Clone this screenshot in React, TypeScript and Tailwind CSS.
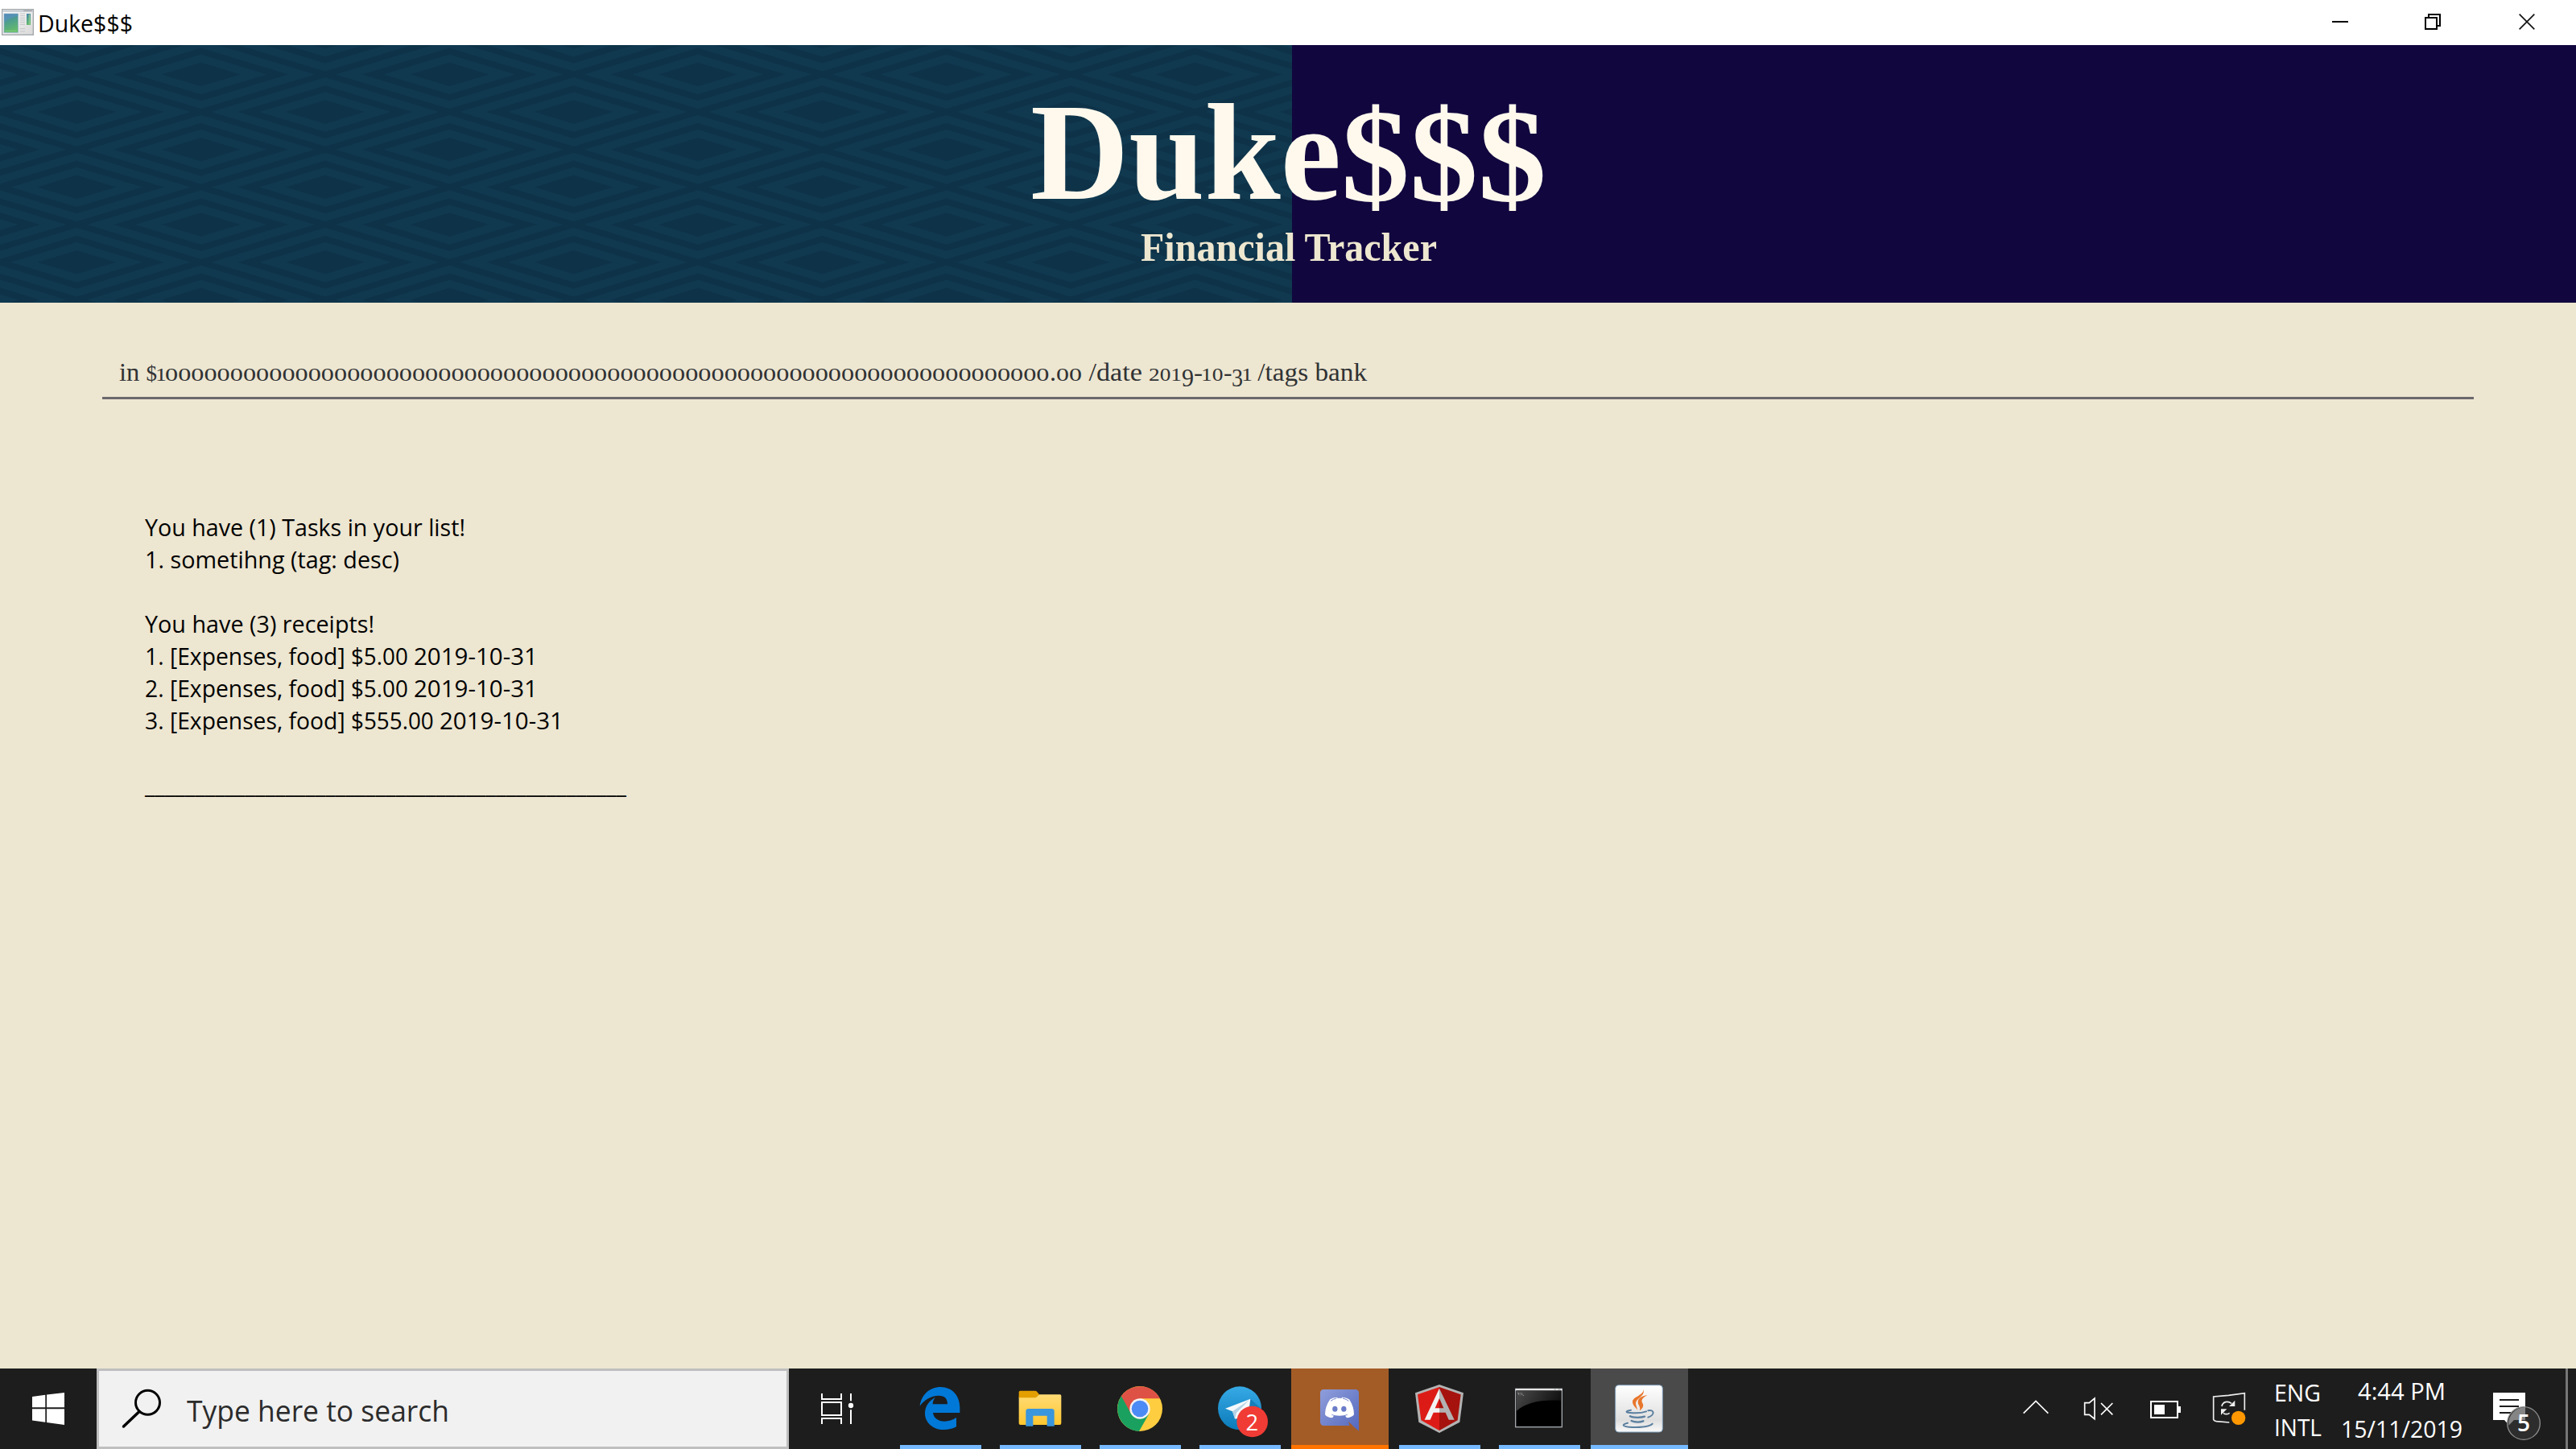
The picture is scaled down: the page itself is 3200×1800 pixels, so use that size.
import React, { useLayoutEffect, useRef } from "react";

/** One run of text, stretched horizontally so that it fills its box. */
function Fit({ children, className = "" }: { children: string; className?: string }) {
  const outer = useRef<HTMLSpanElement>(null);
  const inner = useRef<HTMLSpanElement>(null);
  useLayoutEffect(() => {
    const o = outer.current;
    const i = inner.current;
    if (!o || !i) return;
    i.style.transform = "none";
    const natural = i.getBoundingClientRect().width;
    i.style.transform = `scaleX(${o.getBoundingClientRect().width / natural})`;
  }, [children]);
  return (
    <span ref={outer} className={`block shrink-0 whitespace-pre ${className}`}>
      <span ref={inner} className="inline-block origin-left">
        {children}
      </span>
    </span>
  );
}

/** Icon drawn on a grid of three units to the pixel. */
function Icon({ x, y = 30, w, h = 300, className = "", children }: {
  x: number; y?: number; w: number; h?: number; className?: string; children: React.ReactNode;
}) {
  return (
    <svg className={`block shrink-0 ${className}`} width={w / 3} height={h / 3} viewBox={`${x} ${y} ${w} ${h}`} fill="none">
      {children}
    </svg>
  );
}

function TitleBar() {
  return (
    <div className="flex h-14 shrink-0 items-start bg-white text-black">
      <Icon x={0} y={0} w={129} h={168}>
        <defs>
          <linearGradient id="pane" x1="0" y1="0" x2="0.3" y2="1">
            <stop offset="0" stopColor="#4a7fae" />
            <stop offset="0.5" stopColor="#4fa08c" />
            <stop offset="1" stopColor="#63b96d" />
          </linearGradient>
          <linearGradient id="frame" x1="0" y1="0" x2="1" y2="1">
            <stop offset="0" stopColor="#fdfdfd" />
            <stop offset="1" stopColor="#d8d8d8" />
          </linearGradient>
        </defs>
        <rect x="8" y="35" width="116" height="95" fill="url(#frame)" stroke="#a3a7ab" strokeWidth="4" />
        <path d="M10 41H122" stroke="#c3c9d1" strokeWidth="6" />
        <path d="M88 40H120" stroke="#9aa0a8" strokeWidth="4" />
        <rect x="15" y="51" width="52" height="70" fill="url(#pane)" stroke="#8fb3c6" strokeWidth="2" />
        <path d="M16 84Q35 64 67 60V52H16Z" fill="#5c93c4" opacity="0.6" />
        <path d="M20 115H62" stroke="#86cf7c" strokeWidth="3" />
        <path d="M74 51H93M74 59H93M74 67H93M74 75H93M74 83H93M74 91H93M74 107H93M74 117H93" stroke="#c2c4c6" strokeWidth="3" />
        <rect x="99" y="51" width="15" height="42" fill="url(#pane)" />
        <path d="M109 53V92" stroke="#9fd29c" strokeWidth="3" />
      </Icon>
      <Fit className="ml-[4px] mt-[9px] w-[118px] text-[29.5px] leading-[40px]">Duke$$$</Fit>
      <div className="ml-auto flex">
        <Icon x={120} y={0} w={162} h={168}><path d="M171 81H231" stroke="#000" strokeWidth="6" /></Icon>
        <Icon x={465} y={0} w={162} h={168} className="ml-[61px]">
          <path d="M519 66H561V108H519ZM531 63V54H573V96H564" stroke="#000" strokeWidth="6" />
        </Icon>
        <Icon x={810} y={0} w={270} h={168} className="ml-[61px]">
          <path d="M869 53L925 109M925 53L869 109" stroke="#111" strokeWidth="5" />
        </Icon>
      </div>
    </div>
  );
}

function diamond(cx: number, cy: number, k: number) {
  const a = 154.35 * k;
  const b = 46.67 * k;
  return `M${cx - a} ${cy}L${cx} ${cy - b}L${cx + a} ${cy}L${cx} ${cy + b}Z`;
}

/** Centres of the nested diamonds, every second row shifted by half a period. */
const centres: [number, number][] = [];
for (let row = -1; row <= 7; row++) {
  for (let col = -1; col <= 5; col++) {
    centres.push([95.3 + col * 308.7 + (row % 2 === 0 ? 154.35 : 0), 36.4 + row * 46.67]);
  }
}

const rings: [number, string][] = [
  [0.915, "#103950"],
  [0.705, "#0e3349"],
  [0.528, "#103950"],
  [0.318, "#0e3349"],
];

function DiamondPattern() {
  return (
    <svg className="absolute inset-0" width="1605" height="320">
      <rect width="1605" height="320" fill="#0e3349" />
      {rings.map(([k, fill]) => (
        <path key={k} d={centres.map(([x, y]) => diamond(x, y, k)).join("")} fill={fill} />
      ))}
    </svg>
  );
}

function Banner() {
  return (
    <header className="relative h-[320px] shrink-0 bg-[#11063e]">
      <DiamondPattern />
      <div className="relative flex flex-col items-center pt-[46px] font-['Liberation_Serif',serif] font-bold">
        <h1 className="flex text-[172px] leading-[174px] text-[#fff9ed]">
          <Fit className="w-[386px]">Duke</Fit>
          <Fit className="w-[255px] translate-y-[4px] text-[166px]">$$$</Fit>
        </h1>
        <p className="mt-[6px] text-[50px] leading-[50px] text-[#eee7d0]">
          <Fit className="w-[368px] translate-x-[1px]">Financial Tracker</Fit>
        </p>
      </div>
    </header>
  );
}

const digits = "text-[22.5px]";
const one = "w-[14px] -mx-[2px] text-[22.5px]";
const low = "text-[31px] translate-y-[7px]";

function CommandField() {
  return (
    <div className="ml-[127px] mt-[61px] h-[59px] w-[2946px] shrink-0 border-b-[3px] border-[#6b696c] pl-[21px] pt-[1px] font-['Liberation_Serif',serif] text-[31px] text-[#303234]">
      <div className="flex items-baseline leading-[50px]">
        <Fit className="w-[33.5px]">in </Fit>
        <Fit className="w-[13.5px] text-[27px]">$</Fit>
        <Fit className={one}>1</Fit>
        <Fit className={`w-[1098.5px] ${digits}`}>{"0".repeat(68)}</Fit>
        <Fit className="w-[8px]">.</Fit>
        <Fit className={`w-[32px] ${digits}`}>00</Fit>
        <Fit className="w-[83.5px]"> /date </Fit>
        <Fit className={`w-[41px] ${digits}`}>201</Fit>
        <Fit className={`w-[15px] ${low}`}>9</Fit>
        <Fit className="w-[11px]">-</Fit>
        <Fit className={`w-[27.5px] -ml-[2px] ${digits}`}>10</Fit>
        <Fit className="w-[10.5px]">-</Fit>
        <Fit className={`w-[14px] ${low}`}>3</Fit>
        <Fit className={one}>1</Fit>
        <Fit className="w-[144px]"> /tags bank</Fit>
      </div>
    </div>
  );
}

function Output() {
  return (
    <div className="ml-[180px] mt-[139px] text-[29.5px] leading-[40px] text-black">
      <Fit className="w-[398px]">You have (1) Tasks in your list!</Fit>
      <Fit className="w-[316px]">1. sometihng (tag: desc)</Fit>
      <Fit className="mt-[40px] w-[285px]">You have (3) receipts!</Fit>
      {["1. ", "2. "].map((n) => (
        <div key={n} className="flex">
          <Fit className="w-[256px]">{n + "[Expenses, food] "}</Fit>
          <Fit className="w-[78px]">$5.00 </Fit>
          <Fit className="w-[154px]">2019-10-31</Fit>
        </div>
      ))}
      <div className="flex">
        <Fit className="w-[256px]">{"3. [Expenses, food] "}</Fit>
        <Fit className="w-[110px]">$555.00 </Fit>
        <Fit className="w-[154px]">2019-10-31</Fit>
      </div>
      <Fit className="mt-[40px] w-[598px]">{"_".repeat(48)}</Fit>
    </div>
  );
}

function EdgeIcon() {
  return (
    <Icon x={444} w={363}>
      <path fill="#0078d7" d="M548 170C553 128 585 99 625 99C670 99 697 133 697 175V195H597C599 215 617 227 640 227C655 227 670 222 684 213V247C670 255 655 258 637 258C595 258 567 230 567 197C567 170 583 150 606 137C600 144 596 152 596 163H651C651 143 641 131 618 131C590 131 562 148 548 170Z" />
    </Icon>
  );
}

function FolderIcon() {
  return (
    <Icon x={816} w={363}>
      <defs>
        <linearGradient id="folder" x1="0" y1="0" x2="0" y2="1">
          <stop offset="0" stopColor="#ffdb75" />
          <stop offset="1" stopColor="#ffc62f" />
        </linearGradient>
      </defs>
      <path d="M917 136H980L992 127H1070Q1075 127 1075 132V234Q1075 240 1069 240H923Q917 240 917 234Z" fill="url(#folder)" />
      <path d="M917 139V118Q917 113 922 113H977Q982 113 985 117L993 127L984 136Q981 139 976 139Z" fill="#e39f00" />
      <path d="M943 245V190Q943 180 953 180H1039Q1049 180 1049 190V245H1022V206H970V245Z" fill="#3a96dd" />
    </Icon>
  );
}

function ChromeIcon() {
  return (
    <Icon x={48} w={363}>
      <circle cx="228" cy="180" r="84" fill="#ffcd40" />
      <path d="M159 133A84 84 0 0 0 225 264L262 199L228 180Z" fill="#1aa15f" />
      <path d="M159 133A84 84 0 0 1 303 142H228V180L195 199Z" fill="#de5145" />
      <circle cx="228" cy="180" r="38" fill="#f4f4f4" />
      <circle cx="228" cy="180" r="31" fill="#4c8bf5" />
    </Icon>
  );
}

function TelegramIcon() {
  return (
    <Icon x={420} w={363}>
      <defs>
        <linearGradient id="telegram" x1="0" y1="0" x2="0" y2="1">
          <stop offset="0" stopColor="#36aae6" />
          <stop offset="1" stopColor="#0b7ab8" />
        </linearGradient>
      </defs>
      <circle cx="600" cy="178" r="81" fill="url(#telegram)" />
      <path d="M640 143L680 180V200L640 215L600 195Z" fill="#0f74ad" opacity="0.7" />
      <path d="M546 179L640 143L632 205L583 218L573 190Z" fill="#f5f9fc" />
      <path d="M573 190L636 147L588 195L582 218Z" fill="#b5d2e6" />
      <circle cx="647" cy="228" r="58" fill="#f03c35" />
      <text x="646" y="262" textAnchor="middle" fontSize="82" fill="#fff" fontFamily="Open Sans, sans-serif">2</text>
    </Icon>
  );
}

function DiscordIcon() {
  return (
    <Icon x={792} w={363}>
      <defs>
        <linearGradient id="discord" x1="0" y1="0" x2="1" y2="1">
          <stop offset="0" stopColor="#8f9edb" />
          <stop offset="1" stopColor="#5468bd" />
        </linearGradient>
      </defs>
      <path d="M914 108H1030Q1044 108 1044 122V263L1020 243H914Q900 243 900 229V122Q900 108 914 108Z" fill="url(#discord)" />
      <path d="M1005 228L1044 263L1020 243H1010Z" fill="#a45c27" />
      <path d="M937 145Q948 137 963 137L965 141Q972 140 979 141L982 137Q996 137 1008 145Q1026 172 1026 202Q1017 213 999 214L993 206Q1000 204 1004 200Q972 212 940 200Q944 204 951 206L945 214Q926 213 918 202Q918 172 937 145Z" fill="#fff" />
      <path d="M939 151Q948 144 961 141M1006 151Q997 144 984 141" stroke="#7685cc" strokeWidth="3" />
      <ellipse cx="955" cy="181" rx="9.5" ry="10.5" fill="#6b7cc9" />
      <ellipse cx="988" cy="181" rx="9.5" ry="10.5" fill="#6b7cc9" />
    </Icon>
  );
}

function AngularIcon() {
  return (
    <Icon x={24} w={363}>
      <path d="M204 90L294 121L280 230L204 270L127 230L114 121Z" fill="#b3b3b3" />
      <path d="M204 99L123 127L136 223L204 261Z" fill="#dd1b16" />
      <path d="M204 99L284 127L272 223L204 261Z" fill="#a6120d" />
      <path d="M204 104L149 221H170L182 194H204V178H188L204 141Z" fill="#f2f2f2" />
      <path d="M204 104L260 221H239L227 194H204V178H220L204 141Z" fill="#b2b2b2" />
    </Icon>
  );
}

function ConsoleIcon() {
  return (
    <Icon x={396} w={363}>
      <defs>
        <linearGradient id="gloss" x1="0" y1="0" x2="1" y2="0.3">
          <stop offset="0" stopColor="#4a4a4a" />
          <stop offset="1" stopColor="#121212" />
        </linearGradient>
      </defs>
      <rect x="488" y="106" width="173" height="142" fill="#000" stroke="#a5a9ae" strokeWidth="4" />
      <path d="M492 114H657V149Q540 143 492 188Z" fill="url(#gloss)" />
      <rect x="488" y="105" width="173" height="7" fill="#e6e6e6" />
      <path d="M632 108H638M646 108H656" stroke="#999" strokeWidth="3" />
      <path d="M496 122H500V128M505 121V124M505 128V130M510 121L513 129M515 130H519" stroke="#bbb" strokeWidth="2" />
    </Icon>
  );
}

function JavaIcon() {
  return (
    <Icon x={768} w={363}>
      <defs>
        <linearGradient id="java" x1="0" y1="0" x2="0" y2="1">
          <stop offset="0" stopColor="#fff" />
          <stop offset="0.75" stopColor="#dfdfdf" />
          <stop offset="1" stopColor="#fafafa" />
        </linearGradient>
      </defs>
      <rect x="860" y="92" width="176" height="175" rx="12" fill="url(#java)" stroke="#7f9db8" strokeWidth="3" />
      <path d="M964 104C972 128 924 134 924 154C924 168 936 176 943 185C938 166 932 160 940 149C950 136 972 128 964 104Z" fill="#e8762b" />
      <path d="M980 129C958 132 944 142 944 155C944 166 955 171 951 187C966 176 966 166 960 157C955 146 964 137 980 129Z" fill="#e8762b" />
      <g stroke="#5b7f9f" strokeLinecap="round" fill="none">
        <path d="M918 185C898 188 896 194 915 195C935 197 958 196 975 190" strokeWidth="6" />
        <path d="M982 187C1004 181 1010 202 982 212" strokeWidth="6" />
        <path d="M915 208C925 214 955 214 969 209" strokeWidth="7" />
        <path d="M920 225C932 231 952 231 964 226" strokeWidth="7" />
        <path d="M906 233C884 238 884 245 912 248C945 251 985 248 998 236" strokeWidth="6" />
      </g>
    </Icon>
  );
}

const apps = [
  { name: "edge", icon: <EdgeIcon />, tile: "", bar: "mx-[10px] bg-[#76b9ff]" },
  { name: "folder", icon: <FolderIcon />, tile: "", bar: "mx-[10px] bg-[#76b9ff]" },
  { name: "chrome", icon: <ChromeIcon />, tile: "", bar: "mx-[10px] bg-[#76b9ff]" },
  { name: "telegram", icon: <TelegramIcon />, tile: "", bar: "mx-[10px] bg-[#76b9ff]" },
  { name: "discord", icon: <DiscordIcon />, tile: "bg-[#a45c27]", bar: "bg-[#ff7400]" },
  { name: "angular", icon: <AngularIcon />, tile: "", bar: "mx-[10px] bg-[#76b9ff]" },
  { name: "console", icon: <ConsoleIcon />, tile: "", bar: "mx-[10px] bg-[#76b9ff]" },
  { name: "java", icon: <JavaIcon />, tile: "bg-[#4a4a4a]", bar: "bg-[#76b9ff]" },
];

function Tray() {
  return (
    <div className="ml-auto flex text-white">
      <Icon x={90} w={120}><path d="M101 197L147 151L193 197" stroke="#fff" strokeWidth="5" /></Icon>
      <Icon x={318} w={120} className="ml-[36px]">
        <path d="M329 158H346L366 141V218L346 202H329Z" stroke="#fff" strokeWidth="5" />
        <path d="M390 159L433 202M433 159L390 202" stroke="#fff" strokeWidth="5" />
      </Icon>
      <Icon x={564} w={132} className="ml-[42px]">
        <rect x="576" y="153" width="99" height="60" stroke="#fff" strokeWidth="6" />
        <path d="M588 165H627V201H588ZM678 171H687V195H678Z" fill="#fff" />
      </Icon>
      <Icon x={801} w={132} className="ml-[35px]">
        <path d="M925 185V122L865 130L809 135V220Q811 226 820 227L868 231" stroke="#ededed" strokeWidth="5" />
        <path d="M840 171C843 154 862 149 876 160" stroke="#ededed" strokeWidth="5" />
        <path d="M889 149V171H867Z" fill="#ededed" />
        <path d="M837 203V181H859Z" fill="#ededed" />
        <path d="M846 196C853 202 861 201 869 196" stroke="#ededed" strokeWidth="5" />
        <circle cx="902" cy="214" r="26" fill="#ff9800" />
      </Icon>
      <div className="ml-[34px] mt-[8px] flex w-[60px] flex-col text-[29px] leading-[43px]">
        <Fit className="w-[58px]">ENG</Fit>
        <Fit className="w-[59px]">INTL</Fit>
      </div>
      <div className="ml-[22px] mt-[4px] flex w-[152px] flex-col items-center text-[29px] leading-[47px]">
        <Fit className="w-[109px]">4:44 PM</Fit>
        <Fit className="w-[151px]">15/11/2019</Fit>
      </div>
      <Icon x={885} w={189} className="ml-[36px]">
        <path d="M891 120H1011V222H969L951 242L933 222H891Z" fill="#fff" />
        <path d="M915 147H987M915 171H987M915 195H960" stroke="#1d1d1d" strokeWidth="6" />
        <circle cx="1005" cy="234" r="61" fill="#2d2d2d" />
        <path d="M1011 174V222H969L949 242A61 61 0 0 1 1011 174Z" fill="#858585" />
        <circle cx="1005" cy="234" r="61" stroke="#8e8e8e" strokeWidth="4" />
        <text x="1005" y="264" textAnchor="middle" fontSize="84" fontWeight="600" fill="#fff" fontFamily="Open Sans, sans-serif">5</text>
      </Icon>
      <div className="ml-[29px] mr-[10px] w-[3px] bg-[#777]" />
    </div>
  );
}

function Taskbar() {
  return (
    <footer className="flex h-[100px] shrink-0 bg-[#1d1d1d]">
      <svg className="block shrink-0" width="120" height="100" viewBox="0 0 120 100">
        <path d="M40 35L56.3 32.8V48.3H40ZM58 32.5L80 30V48.3H58ZM40 50.2H56.3V66.7L40 64.5ZM58 50.2H80V70L58 67Z" fill="#fff" />
      </svg>
      <div className="flex w-[860px] shrink-0 border-[3px] border-[#bfbfbf] bg-[#f1f1f1] text-[#2b2b2b]">
        <svg className="-mt-[3px] -ml-[3px] block shrink-0" width="112" height="100" viewBox="120 0 112 100" fill="none" stroke="#000">
          <circle cx="183.5" cy="42.3" r="15" strokeWidth="3" />
          <path d="M173 53.5L153.5 72" strokeWidth="3.5" strokeLinecap="round" />
        </svg>
        <Fit className="mt-[22px] w-[326px] text-[36.5px] leading-[54px]">Type here to search</Fit>
      </div>
      <Icon x={60} w={360} className="mr-[8px]">
        <path d="M183 123V144H255V123M183 156H255V204H183ZM183 237V216H255V237M291 123V151M291 184V237" stroke="#fff" strokeWidth="6" />
        <circle cx="291" cy="168" r="9.5" fill="#fff" />
      </Icon>
      <div className="flex gap-[3px]">
        {apps.map((a) => (
          <div key={a.name} className={`flex h-[100px] w-[121px] flex-col ${a.tile}`}>
            <div className="h-[95px] overflow-hidden">{a.icon}</div>
            <div className={`h-[5px] ${a.bar}`} />
          </div>
        ))}
      </div>
      <Tray />
    </footer>
  );
}

export default function App() {
  return (
    <div className="flex h-[1800px] w-[3200px] flex-col overflow-hidden bg-[#ede6d1] font-['Open_Sans',sans-serif]">
      <TitleBar />
      <Banner />
      <CommandField />
      <main className="flex-1">
        <Output />
      </main>
      <Taskbar />
    </div>
  );
}
